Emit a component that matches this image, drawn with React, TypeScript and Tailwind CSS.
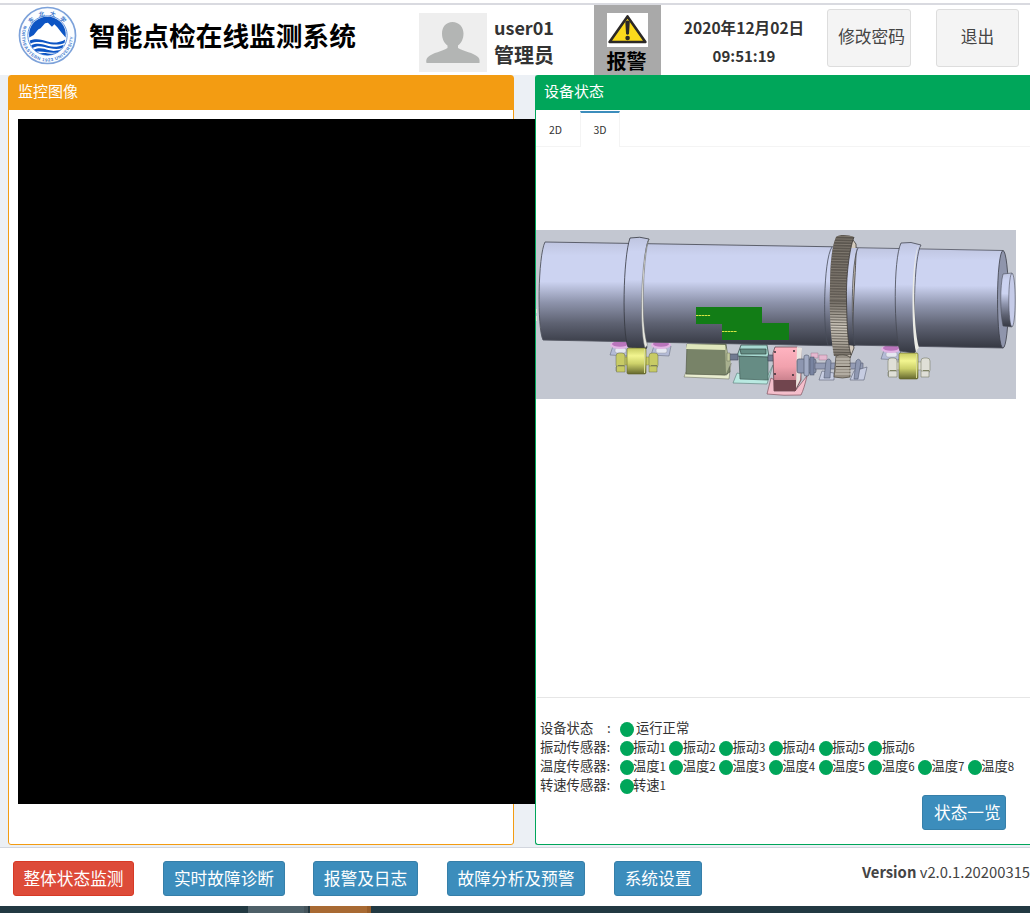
import React from "react";

const vibration = ["振动1", "振动2", "振动3", "振动4", "振动5", "振动6"];
const temperature = ["温度1", "温度2", "温度3", "温度4", "温度5", "温度6", "温度7", "温度8"];

function SchoolLogo() {
  return (
    <svg viewBox="0 0 60 60" className="h-[59px] w-[59px]">
      <defs>
        <path id="ringTop" d="M12.5 22 A19.5 19.5 0 0 1 47.5 22" />
        <path id="ringBottom" d="M6.2 20 A26 26 0 1 0 53.8 20" />
      </defs>
      <circle cx="30" cy="30" r="28.5" fill="#fbfdff" stroke="#7da2da" strokeWidth="1.7" />
      <circle cx="30" cy="30" r="20" fill="#fff" stroke="#5d8fdb" strokeWidth="1" />
      <path
        d="M11.5 32 C10 19 20 11 30 11 C40 11 50 19 48.5 32 L44.5 27.5 L40 21.5 L37 18.5 L34.5 21 L30.5 17 L27.5 17.5 L23 22.5 L20.5 24 L16 29.5 Z"
        fill="#0d55c4"
      />
      <path
        d="M12 35 C18 32.5 25 34 30 36 S42 37.5 48 34 L47.3 37.5 C41 40.3 34 39 29 37.8 S18 36 12.7 38.3 Z M13.4 39.8 C20 36.7 26 39 31 40.6 S42 41.3 46.6 39.3 L45 42.6 C39 45 32 42.7 27 41.6 S19 40.3 14.8 42.6 Z M16.3 44.3 C22 41.7 27 43.6 31 44.8 S38 46 43.6 44.2 L40.5 47 C34 49 27 45.6 18.5 46.5 Z"
        fill="#0d55c4"
      />
      <path d="M22 48.3 C27 46.6 32 49.3 38 48.3 Q30 52 22 48.3Z" fill="#0d55c4" />
      <text fill="#3f79cd" fontSize="6" fontWeight="700" letterSpacing="4" className="font-['Noto_Sans_CJK_SC',sans-serif]">
        <textPath href="#ringTop" startOffset="3">
          <tspan dy="-1.2">东北大学</tspan>
        </textPath>
      </text>
      <text fill="#3f79cd" fontSize="4.5" fontWeight="700" letterSpacing="0.55" className="font-['Liberation_Sans',sans-serif]">
        <textPath href="#ringBottom">NORTHEASTERN 1923 UNIVERSITY</textPath>
      </text>
    </svg>
  );
}

function Avatar() {
  return (
    <svg viewBox="0 0 68 59" className="h-[59px] w-[68px]">
      <rect width="68" height="59" fill="#eee" />
      <path
        d="M33.5 9 C40 9 44.5 14 44.5 20.5 C44.5 25.5 42.5 30 39 32.5 V35 C45 38.5 54 39.5 59 44 C61 46 60.5 48 60.5 50 H7.5 C7 48 7 46 9 44 C14 39.5 23 38.5 28.5 35 V32.5 C25 30 23 25.5 23 20.5 C23 14 27 9 33.5 9 Z"
        fill="#b3b5b4"
      />
    </svg>
  );
}

function WarningSign() {
  return (
    <svg viewBox="0 0 41 34" className="block h-[34px] w-[41px]">
      <rect width="41" height="34" fill="#fff" />
      <path d="M20.5 3.4 L38.4 29 H2.6 Z" fill="#fbd91c" stroke="#2c2927" strokeWidth="2.6" strokeLinejoin="round" />
      <path d="M18.3 8.5 Q20.5 6.5 22.8 8.5 L22 21 Q20.5 22.4 19.1 21 Z" fill="#2c2927" />
      <circle cx="20.6" cy="25" r="2.3" fill="#2c2927" />
    </svg>
  );
}

function SupportRoller({ x, y, side }: { x: number; y: number; side: string }) {
  return (
    <g transform={`translate(${x} ${y})`}>
      <rect x="3" y="9" width="39" height="8" fill={side} stroke="#777a55" strokeWidth=".4" />
      <rect x="1" y="5" width="9" height="15" rx="3" fill={side} stroke="#666a50" strokeWidth=".5" />
      <path d="M1.5 18h8.5v6H1.5zM1 19v4" fill={side} stroke="#666a50" strokeWidth=".5" />
      <rect x="34" y="5" width="9" height="15" rx="3" fill={side} stroke="#666a50" strokeWidth=".5" />
      <path d="M34 18h8v6h-8z" fill={side} stroke="#666a50" strokeWidth=".5" />
      <path d="M3 17.5h6M36 17.5h6" stroke="#6f7250" strokeWidth=".8" />
      <rect x="12" y="0" width="19" height="26" rx="1.5" fill="url(#yellow)" stroke="#5e6227" strokeWidth=".6" />
      <path d="M29.5 1v24" stroke="#d9dd97" />
    </g>
  );
}

function Bearing({ x, y }: { x: number; y: number }) {
  return (
    <g transform={`translate(${x} ${y})`}>
      <path d="M3 3 L20 3 L18 13 L0 12 Z" fill="#b4bbd6" stroke="#5d6274" strokeWidth=".5" />
      <rect x="5" y="5" width="11" height="5" rx="2" fill="#e5e8f1" stroke="#8a8d9a" strokeWidth=".4" />
      <ellipse cx="10" cy="2" rx="10" ry="4" fill="#e2b5e4" />
      <ellipse cx="10" cy="1" rx="8" ry="2.8" fill="#ba75bc" />
    </g>
  );
}

function KilnModel() {
  const teeth = Array.from({ length: 46 }, (_, i) => i);
  return (
    <svg viewBox="536 230 480 169" className="h-[169px] w-[480px]">
      <defs>
        <linearGradient id="steel" x1="0" y1="0" x2="0" y2="1">
          <stop offset="0" stopColor="#bfc5e0" />
          <stop offset=".13" stopColor="#ccd3f1" />
          <stop offset=".38" stopColor="#ccd3f1" />
          <stop offset=".58" stopColor="#8e94ac" />
          <stop offset=".78" stopColor="#5e6272" />
          <stop offset="1" stopColor="#353842" />
        </linearGradient>
        <linearGradient id="yellow" x1="0" y1="0" x2="0" y2="1">
          <stop offset="0" stopColor="#c7cb62" />
          <stop offset=".3" stopColor="#f2f590" />
          <stop offset=".6" stopColor="#cdd16a" />
          <stop offset="1" stopColor="#65682f" />
        </linearGradient>
        <linearGradient id="toothed" x1="0" y1="0" x2="0" y2="1">
          <stop offset="0" stopColor="#5a554e" />
          <stop offset=".5" stopColor="#635d56" />
          <stop offset=".75" stopColor="#cbc5ba" />
          <stop offset=".9" stopColor="#a8a196" />
          <stop offset="1" stopColor="#6c655d" />
        </linearGradient>
        <linearGradient id="pink" x1="0" y1="0" x2="0" y2="1">
          <stop offset="0" stopColor="#ffb4c1" />
          <stop offset=".45" stopColor="#f1a1ad" />
          <stop offset="1" stopColor="#ac6975" />
        </linearGradient>
        <clipPath id="ringGear">
          <path d="M836 237 C840 234 849 235 854 237 C849 250 846 278 846.5 300 C847 328 848 345 851 355 L834 356 C831 340 829 313 830 286 C830 263 832 246 836 237Z" />
        </clipPath>
      </defs>
      <rect x="536" y="230" width="480" height="169" fill="#c3c7d1" />
      <path d="M536 309h1v4h-1zM536 316h1v5h-1z" fill="#e7ead7" />

      <Bearing x={610} y={343} />
      <Bearing x={651} y={343} />
      <Bearing x={881} y={347} />

      <path d="M545 242 L846 247 L846 346 L543 340 C537 328 538 256 545 242Z" fill="url(#steel)" stroke="#50535f" strokeWidth=".9" />
      <path d="M846 247.5 L1003 250.5 V348 L846 345Z" fill="url(#steel)" stroke="#50535f" strokeWidth=".8" />
      <ellipse cx="1003" cy="299.3" rx="5.5" ry="48.8" fill="#8f95ac" stroke="#3b3d48" strokeWidth=".8" />
      <path d="M1003 274 L1012 273 V327 L1003 326 C1000 312 1000 286 1003 274Z" fill="url(#steel)" stroke="#4c4f5b" strokeWidth=".6" />
      <ellipse cx="1012" cy="300" rx="3.2" ry="26.8" fill="#c5cbe8" stroke="#4c4f5b" strokeWidth=".6" />

      <path d="M630 238 Q640 236 649 239 C642 250 640 335 647 347 L646 349 L628 347 C622 332 623 258 630 238Z" fill="url(#steel)" stroke="#34363e" strokeWidth=".8" />
      <path d="M649 239 C641 255 639 330 645 348 L647.5 345 C643 333 643 304 643.5 290 C644 270 646 247 649 239Z" fill="#e9e9e1" stroke="#6d6f70" strokeWidth=".5" />
      <path d="M832 247 C823 260 823 334 828 345" fill="none" stroke="#484c59" strokeWidth=".8" />
      <path d="M901 243 Q911 241 921 245 C914 255 912 330 918 349 L914 353 L900 351 C894 333 893 260 901 243Z" fill="url(#steel)" stroke="#454752" strokeWidth=".8" />
      <path d="M918.5 244.5 C911 260 911 332 916 352 L919 348 C913 328 912.5 264 918.5 244.5Z" fill="#ebebe5" />

      <path d="M850 236 L856 244 C857 262 850 330 854 348 L850 358 L843 353 C838 333 840 255 850 236Z" fill="#d3cabd" stroke="#393632" strokeWidth=".8" />
      <path d="M857 248 C851.5 262 850 330 855 346 L848 345 C845 320 845 270 850 248Z" fill="url(#steel)" />
      <path d="M858 248 C851 262 851 330 855 346" fill="none" stroke="#484c59" strokeWidth=".8" />
      <g clipPath="url(#ringGear)">
        <rect x="829" y="235" width="26" height="122" fill="url(#toothed)" />
        {teeth.map((i) => (
          <path key={i} d={`M828 ${236 + i * 2.7} L855 ${236.6 + i * 2.7}`} stroke={i > 23 ? "#4c4741" : "#8e877d"} strokeWidth=".7" />
        ))}
      </g>
      <path d="M854 237 C849 250 846 278 846.5 300 C847 328 848 345 851 355" fill="none" stroke="#3e3a36" strokeWidth=".8" />

      <SupportRoller x={615} y={348} side="#c8cb65" />
      <SupportRoller x={887} y={353} side="#dfdfd7" />

      <path d="M686 372 L727 375 L731 363 L729 379 L684 377Z" fill="#e9edd0" stroke="#777b6a" strokeWidth=".6" />
      <path d="M687 344 L726 344 L730 372 L725 375 L686 374Z" fill="#788368" stroke="#555b47" strokeWidth=".7" />
      <path d="M687 344 L725 345 L726 350 L686 349Z" fill="#dfe6bc" />
      <path d="M725 345 L731 362 L726 374Z" fill="#a9b18f" />
      <path d="M737 373 L733 383 L767 384 L773 365 L766 379 Z" fill="#b9e9e1" stroke="#577b75" strokeWidth=".6" />
      <path d="M739 356 H768 V380 L740 379Z" fill="#668c84" stroke="#445f59" strokeWidth=".7" />
      <path d="M741 345 H767 L769 357 L737 356Z" fill="#a7d9d1" stroke="#39504c" strokeWidth=".8" />
      <path d="M740 349 H766 V354 H741Z" fill="#638c83" stroke="#344744" strokeWidth=".7" />
      <path d="M728 354 H738 V360 H728Z M768 355 H774 V361 H768Z" fill="#717a91" stroke="#454b5c" strokeWidth=".6" />
      <path d="M727 353h3v8h-3z" fill="#c4cba0" stroke="#555b47" strokeWidth=".4" />

      <path d="M771 378 L767 394 Q784 396 801 395 Q804 389 807 376 L795 391 Z" fill="#f4becb" stroke="#80535e" strokeWidth=".7" />
      <path d="M775 347 H797 L801 350 V380 L795 391 H774 L773 353Z" fill="url(#pink)" stroke="#513940" strokeWidth=".7" />
      <path d="M774 380 H796 V391 H774Z" fill="#71454e" />
      <path d="M797 347 L802 348 L800 380 L796 388Z" fill="#e9e4df" />
      <circle cx="775" cy="352" r=".9" fill="#252229" />
      <circle cx="794" cy="351" r=".9" fill="#252229" />
      <circle cx="775" cy="374" r=".9" fill="#252229" />
      <circle cx="793" cy="375" r=".9" fill="#252229" />
      <path d="M811 353 H818 V358 H811Z M819 355 H827 V360 H819Z" fill="#e5b8cf" stroke="#98788c" strokeWidth=".5" />
      <rect x="797" y="359" width="19" height="14" rx="2" fill="#8d96b0" stroke="#4e5668" strokeWidth=".7" />
      <rect x="804" y="355" width="5" height="21" rx="2" fill="#a2abc4" stroke="#4e5668" strokeWidth=".6" />
      <rect x="810" y="357" width="4" height="18" fill="#7883a0" stroke="#4e5668" strokeWidth=".5" />
      <path d="M815 363 H863 V369 H815Z" fill="#949cb5" stroke="#555d70" strokeWidth=".6" />
      <path d="M822 371 L819 380 H834 V373Z M854 371 L850 380 H864 L867 367 Z" fill="#c6cce1" stroke="#5d6375" strokeWidth=".6" />
      <path d="M824 378 L826 361 Q829 357 831 361 L830 378Z M854 379 L856 361 Q859 357 861 362 L858 379Z" fill="#8f98b2" stroke="#535b70" strokeWidth=".6" />
      <path d="M836 356 Q843 353 850 357 V377 Q843 379 834 377Z" fill="#968f85" stroke="#4a463e" strokeWidth=".7" />
      <path d="M836 359h14m-14 3h14m-14 3h14m-14 3h15m-15 3h15m-16 3h16" stroke="#d5d0c6" strokeWidth=".9" />
      <path d="M836 366.5h14" stroke="#474039" strokeWidth=".8" />

      <rect x="696" y="307" width="66" height="17" fill="#127d16" />
      <rect x="722" y="323" width="67" height="17" fill="#127d16" />
      <path d="M696 315.5h14.5M722 331.5h15" stroke="#d7e642" strokeDasharray="2.5 .4" />
    </svg>
  );
}

function Dot() {
  return <span className="h-[15px] w-[14px] shrink-0 translate-y-[2px] rounded-[50%] bg-[#00a65a]" />;
}

function SensorRow({ label, items }: { label: string; items: string[] }) {
  return (
    <div className="flex h-[19px] items-center">
      <span className="w-[79.5px] shrink-0">{label}</span>
      {items.map((name) => (
        <span key={name} className="flex w-[49.75px] shrink-0 items-center whitespace-nowrap">
          <Dot />
          <span className="-ml-[0.5px]">
            {name.slice(0, 2)}
            <span className="text-[11.5px]">{name.slice(2)}</span>
          </span>
        </span>
      ))}
    </div>
  );
}

function NavButton({ children, className }: { children: React.ReactNode; className: string }) {
  return (
    <button className={`h-[35px] shrink-0 rounded-[3px] border pb-px text-[16.7px] leading-none whitespace-nowrap text-white ${className}`}>
      {children}
    </button>
  );
}

export default function App() {
  return (
    <div className="flex h-[913px] w-[1030px] flex-col overflow-hidden bg-[#ecf0f5] font-['Noto_Sans_CJK_SC',sans-serif] text-[#333]">
      <header className="h-[75px] shrink-0 bg-white pt-[3px]">
        <div className="h-[2px] bg-[#d9dae0]" />
        <div className="flex h-[70px] items-start">
          <div className="ml-[18px] mt-px w-[71px]">
            <SchoolLogo />
          </div>
          <h1 className="mt-[10px] w-[330px] text-[26.7px] leading-[40px] font-bold whitespace-nowrap text-black">智能点检在线监测系统</h1>
          <div className="mt-[8px]">
            <Avatar />
          </div>
          <div className="mt-[9px] ml-[7px] w-[100px] text-[20px] leading-[27px] font-bold">
            <div className="text-[18px]">user01</div>
            <div>管理员</div>
          </div>
          <div className="flex h-[70px] w-[67px] flex-col items-center bg-[#a9a9a9] pt-[8px] text-[20px] leading-[28px] font-bold text-black">
            <WarningSign />
            <span className="mr-[2px]">报警</span>
          </div>
          <div className="mt-[8px] w-[166px] text-center text-[15.6px] leading-[28px] font-bold">
            <div>2020年12月02日</div>
            <div className="pt-px text-[15px] leading-[28px]">09:51:19</div>
          </div>
          <button className="mt-[4px] h-[58px] w-[84px] rounded-[3px] border border-[#ddd] bg-[#f4f4f4] pb-[2px] pl-[5px] text-[16.7px] whitespace-nowrap text-[#444]">修改密码</button>
          <button className="mt-[4px] ml-[25px] h-[58px] w-[83px] rounded-[3px] border border-[#ddd] bg-[#f4f4f4] pb-[2px] text-[16.7px] text-[#444]">退出</button>
        </div>
      </header>

      <main className="flex h-[772px] shrink-0 pl-[8px]">
        <section className="h-[770px] w-[506px] shrink-0 rounded-[3px] border border-[#f39c12] bg-white">
          <h2 className="h-[34px] bg-[#f39c12] pl-[9px] text-[15px] leading-[29px] text-white">监控图像</h2>
          <div className="mt-[9px] ml-[9px] h-[685px] w-[518px] bg-black" />
        </section>
        <section className="ml-[21px] h-[770px] w-[510px] shrink-0 rounded-l-[3px] border border-r-0 border-[#00a65a] bg-white">
          <h2 className="h-[34px] bg-[#00a65a] pl-[8px] text-[15px] leading-[29px] text-white">设备状态</h2>
          <nav className="flex h-[37px] border-b border-[#f4f4f4] text-[10.5px]">
            <div className="w-[44px] pl-[13px] leading-[40px]">2D</div>
            <div className="mt-px h-[36px] w-[40px] border-x border-t-2 border-x-[#f4f4f4] border-t-[#3c8dbc] bg-white text-center leading-[34px]">3D</div>
          </nav>
          <div className="h-[550px] pt-[83px]">
            <KilnModel />
          </div>
          <div className="ml-px h-[147px] border-t border-[#e6e6e6] pt-[20px] pl-[3px] text-[13.3px] leading-[19px]">
            <div className="flex h-[19px] items-center">
              <span className="w-[67px]">设备状态</span>
              <span className="w-[13px]">:</span>
              <Dot />
              <span className="ml-[2px]">运行正常</span>
            </div>
            <SensorRow label="振动传感器:" items={vibration} />
            <SensorRow label="温度传感器:" items={temperature} />
            <SensorRow label="转速传感器:" items={["转速1"]} />
            <button className="mt-px ml-[382px] flex h-[35px] w-[84px] items-center rounded-[3px] border border-[#367fa9] bg-[#3c8dbc] pb-px pl-[11px] text-[16.7px] whitespace-nowrap text-white">状态一览</button>
          </div>
        </section>
      </main>

      <footer className="flex h-[59px] shrink-0 items-start border-t border-[#d2d6de] bg-white pt-[13px] pl-[13px]">
        <NavButton className="w-[121px] border-[#d73925] bg-[#dd4b39]">整体状态监测</NavButton>
        <NavButton className="ml-[29px] w-[122px] border-[#367fa9] bg-[#3c8dbc]">实时故障诊断</NavButton>
        <NavButton className="ml-[28px] w-[105px] border-[#367fa9] bg-[#3c8dbc]">报警及日志</NavButton>
        <NavButton className="ml-[29px] w-[138px] border-[#367fa9] bg-[#3c8dbc]">故障分析及预警</NavButton>
        <NavButton className="ml-[29px] w-[88px] border-[#367fa9] bg-[#3c8dbc]">系统设置</NavButton>
        <div className="ml-[160px] text-[14.8px] leading-[22px] whitespace-nowrap text-[#444]">
          <b>Version</b> v2.0.1.20200315
        </div>
      </footer>
      <div className="flex h-[7px] shrink-0 bg-[#223942] pl-[248px]">
        <div className="w-[56px] bg-[#4e6068]" />
        <div className="w-[5px] border-r border-[#26343a] bg-[#46555c]" />
        <div className="ml-px w-[57px] bg-[#a86a33]" />
        <div className="w-[4px] bg-[#985d29]" />
      </div>
    </div>
  );
}
